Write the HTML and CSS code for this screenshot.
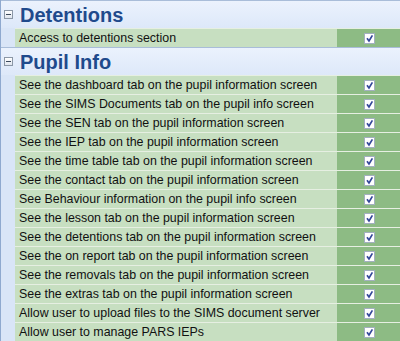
FILE: index.html
```html
<!DOCTYPE html>
<html lang="en">
<head>
    <meta charset="UTF-8">
    <title>Permissions</title>
    <link rel="stylesheet" href="styles.css">
</head>
<body>
<div class="grid">
    <div class="section">
        <div class="sec-head"><span class="toggle"></span><span class="sec-title">Detentions</span></div>
        <div class="rows">
            <div class="row"><div class="label">Access to detentions section</div><div class="val"><span class="chk"><svg width="11" height="11" viewBox="0 0 11 11"><rect x="0.5" y="0.5" width="10" height="10" fill="#fff" stroke="#a3b0bf"/><path d="M3 5.2 L5 8 L8.4 2.4" fill="none" stroke="#33479a" stroke-width="1.7"/></svg></span></div></div>
        </div>
    </div>
    <div class="section">
        <div class="sec-head"><span class="toggle"></span><span class="sec-title">Pupil Info</span></div>
        <div class="rows">
            <div class="row"><div class="label">See the dashboard tab on the pupil information screen</div><div class="val"><span class="chk"><svg width="11" height="11" viewBox="0 0 11 11"><rect x="0.5" y="0.5" width="10" height="10" fill="#fff" stroke="#a3b0bf"/><path d="M3 5.2 L5 8 L8.4 2.4" fill="none" stroke="#33479a" stroke-width="1.7"/></svg></span></div></div>
            <div class="row"><div class="label">See the SIMS Documents tab on the pupil info screen</div><div class="val"><span class="chk"><svg width="11" height="11" viewBox="0 0 11 11"><rect x="0.5" y="0.5" width="10" height="10" fill="#fff" stroke="#a3b0bf"/><path d="M3 5.2 L5 8 L8.4 2.4" fill="none" stroke="#33479a" stroke-width="1.7"/></svg></span></div></div>
            <div class="row"><div class="label">See the SEN tab on the pupil information screen</div><div class="val"><span class="chk"><svg width="11" height="11" viewBox="0 0 11 11"><rect x="0.5" y="0.5" width="10" height="10" fill="#fff" stroke="#a3b0bf"/><path d="M3 5.2 L5 8 L8.4 2.4" fill="none" stroke="#33479a" stroke-width="1.7"/></svg></span></div></div>
            <div class="row"><div class="label">See the IEP tab on the pupil information screen</div><div class="val"><span class="chk"><svg width="11" height="11" viewBox="0 0 11 11"><rect x="0.5" y="0.5" width="10" height="10" fill="#fff" stroke="#a3b0bf"/><path d="M3 5.2 L5 8 L8.4 2.4" fill="none" stroke="#33479a" stroke-width="1.7"/></svg></span></div></div>
            <div class="row"><div class="label">See the time table tab on the pupil information screen</div><div class="val"><span class="chk"><svg width="11" height="11" viewBox="0 0 11 11"><rect x="0.5" y="0.5" width="10" height="10" fill="#fff" stroke="#a3b0bf"/><path d="M3 5.2 L5 8 L8.4 2.4" fill="none" stroke="#33479a" stroke-width="1.7"/></svg></span></div></div>
            <div class="row"><div class="label">See the contact tab on the pupil information screen</div><div class="val"><span class="chk"><svg width="11" height="11" viewBox="0 0 11 11"><rect x="0.5" y="0.5" width="10" height="10" fill="#fff" stroke="#a3b0bf"/><path d="M3 5.2 L5 8 L8.4 2.4" fill="none" stroke="#33479a" stroke-width="1.7"/></svg></span></div></div>
            <div class="row"><div class="label">See Behaviour information on the pupil info screen</div><div class="val"><span class="chk"><svg width="11" height="11" viewBox="0 0 11 11"><rect x="0.5" y="0.5" width="10" height="10" fill="#fff" stroke="#a3b0bf"/><path d="M3 5.2 L5 8 L8.4 2.4" fill="none" stroke="#33479a" stroke-width="1.7"/></svg></span></div></div>
            <div class="row"><div class="label">See the lesson tab on the pupil information screen</div><div class="val"><span class="chk"><svg width="11" height="11" viewBox="0 0 11 11"><rect x="0.5" y="0.5" width="10" height="10" fill="#fff" stroke="#a3b0bf"/><path d="M3 5.2 L5 8 L8.4 2.4" fill="none" stroke="#33479a" stroke-width="1.7"/></svg></span></div></div>
            <div class="row"><div class="label">See the detentions tab on the pupil information screen</div><div class="val"><span class="chk"><svg width="11" height="11" viewBox="0 0 11 11"><rect x="0.5" y="0.5" width="10" height="10" fill="#fff" stroke="#a3b0bf"/><path d="M3 5.2 L5 8 L8.4 2.4" fill="none" stroke="#33479a" stroke-width="1.7"/></svg></span></div></div>
            <div class="row"><div class="label">See the on report tab on the pupil information screen</div><div class="val"><span class="chk"><svg width="11" height="11" viewBox="0 0 11 11"><rect x="0.5" y="0.5" width="10" height="10" fill="#fff" stroke="#a3b0bf"/><path d="M3 5.2 L5 8 L8.4 2.4" fill="none" stroke="#33479a" stroke-width="1.7"/></svg></span></div></div>
            <div class="row"><div class="label">See the removals tab on the pupil information screen</div><div class="val"><span class="chk"><svg width="11" height="11" viewBox="0 0 11 11"><rect x="0.5" y="0.5" width="10" height="10" fill="#fff" stroke="#a3b0bf"/><path d="M3 5.2 L5 8 L8.4 2.4" fill="none" stroke="#33479a" stroke-width="1.7"/></svg></span></div></div>
            <div class="row"><div class="label">See the extras tab on the pupil information screen</div><div class="val"><span class="chk"><svg width="11" height="11" viewBox="0 0 11 11"><rect x="0.5" y="0.5" width="10" height="10" fill="#fff" stroke="#a3b0bf"/><path d="M3 5.2 L5 8 L8.4 2.4" fill="none" stroke="#33479a" stroke-width="1.7"/></svg></span></div></div>
            <div class="row"><div class="label">Allow user to upload files to the SIMS document server</div><div class="val"><span class="chk"><svg width="11" height="11" viewBox="0 0 11 11"><rect x="0.5" y="0.5" width="10" height="10" fill="#fff" stroke="#a3b0bf"/><path d="M3 5.2 L5 8 L8.4 2.4" fill="none" stroke="#33479a" stroke-width="1.7"/></svg></span></div></div>
            <div class="row"><div class="label">Allow user to manage PARS IEPs</div><div class="val"><span class="chk"><svg width="11" height="11" viewBox="0 0 11 11"><rect x="0.5" y="0.5" width="10" height="10" fill="#fff" stroke="#a3b0bf"/><path d="M3 5.2 L5 8 L8.4 2.4" fill="none" stroke="#33479a" stroke-width="1.7"/></svg></span></div></div>
        </div>
    </div>
</div>
</body>
</html>
```
FILE: styles.css
```css
*{
    margin: 0;
    padding: 0;
    box-sizing: border-box;
}
body{
    width: 400px;
    height: 341px;
    overflow: hidden;
    background: #dbe7f8;
    font-family: "Liberation Sans", Arial, sans-serif;
}
.grid{
    border-left: 1px solid #8fa9cf;
    height: 341px;
    background: #d9e5f7;
}
.sec-head{
    height: 28px;
    display: flex;
    align-items: center;
    border-top: 1px solid #a9bdd9;
    background: linear-gradient(#ebf2fd, #dde8f9);
}
.toggle{
    width: 9px;
    height: 9px;
    margin-left: 3px;
    margin-right: 7px;
    border: 1px solid #8b97a6;
    background: linear-gradient(#ffffff, #dfe5ee);
    position: relative;
}
.toggle::after{
    content: "";
    position: absolute;
    left: 1px;
    top: 3px;
    width: 5px;
    height: 1px;
    background: #3c4a5c;
}
.sec-title{
    font-size: 20px;
    font-weight: bold;
    color: #1f4a8c;
    line-height: 1;
}
.rows{
    padding-left: 14px;
}
.row{
    display: flex;
    height: 19px;
    border-top: 1px solid #e6efe2;
}
.label{
    flex: 1;
    background: #c7dfc1;
    font-size: 12.4px;
    line-height: 18px;
    padding-left: 4px;
    color: #111;
    white-space: nowrap;
    overflow: hidden;
}
.val{
    width: 63px;
    background: #8dbb84;
    display: flex;
    align-items: center;
    justify-content: center;
}
.chk{
    display: flex;
    margin-left: 1px;
}
```
